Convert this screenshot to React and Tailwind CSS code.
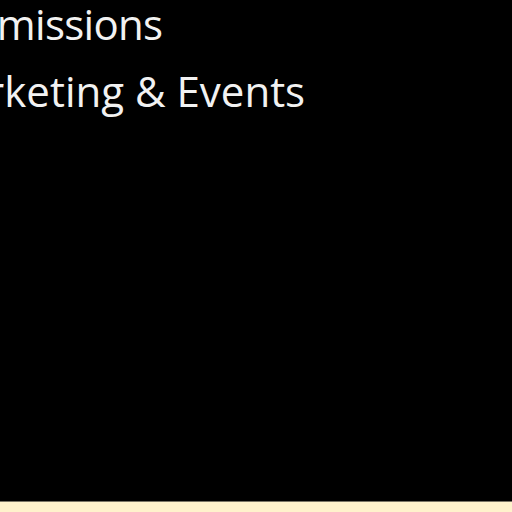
export default function App() {
  return (
    <div className="w-[512px] h-[512px] overflow-hidden bg-black flex flex-col" style={{ fontFamily: '"Open Sans", "Noto Sans", sans-serif' }}>
      <div className="flex-1 flex flex-col text-[42px] leading-[67px] text-[#f2f2f2] font-medium mt-[-10px] whitespace-nowrap">
        <div className="ml-[-54px] tracking-[-0.7px]">Admissions</div>
        <div className="ml-[-74px]">Marketing &amp; Events</div>
      </div>
      <div className="h-px bg-[#7a7566]" />
      <div className="h-[10px] bg-[#fff2cc]" />
    </div>
  );
}
